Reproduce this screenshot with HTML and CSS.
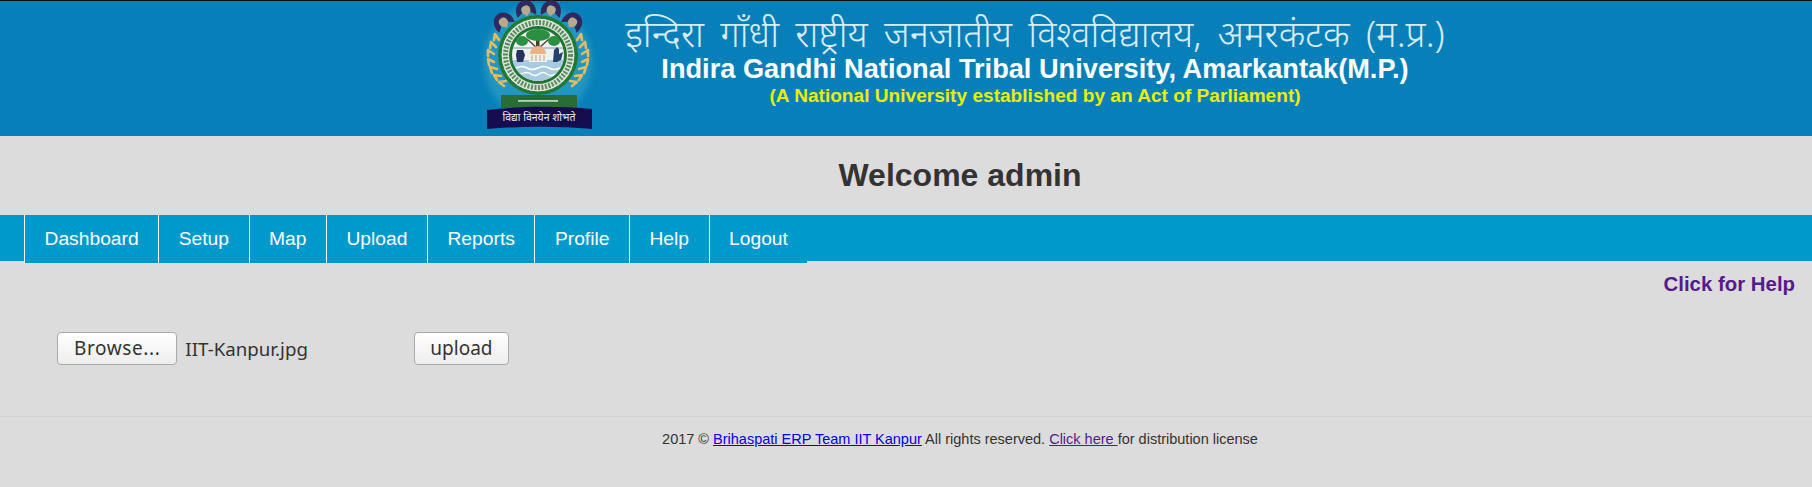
FILE: index.html
```html
<!DOCTYPE html>
<html lang="en">
<head>
<meta charset="utf-8">
<title>Welcome admin</title>
<link rel="stylesheet" href="styles.css">
</head>
<body>
<header class="banner">
  <svg class="logo" viewBox="0 0 120 136" width="120" height="136" aria-label="University emblem">
    <defs>
      <filter id="soft" x="-10%" y="-10%" width="120%" height="120%"><feGaussianBlur stdDeviation="0.6"/></filter>
      <filter id="glow" x="-20%" y="-20%" width="140%" height="140%"><feGaussianBlur stdDeviation="3"/></filter>
      <g id="crest">
        <path d="M-7 4C-9-4-4-8 0-8S9-4 7 4L3 1C4-3 2-4 0-4S-4-3-3 1Z" fill="#2e2a5e"/>
        <path d="M-3 1C-4-3-2-4 0-4S4-3 3 1L0 4Z" fill="#b9a98a"/>
      </g>
      <g id="wheat" fill="none" stroke="#e0bd62" stroke-width="2.6" stroke-linecap="round">
        <path d="M15 34l-1 6m1-6l4 6"/>
        <path d="M11 42l-1 6m1-6l5 5"/>
        <path d="M8 50l0 6m0-6l6 4"/>
        <path d="M8 59l1 6m-1-6l6 3"/>
        <path d="M10 67l2 6m-2-6l7 2"/>
        <path d="M14 75l3 5m-3-5l7 1"/>
        <path d="M19 82l5 4m-5-4l7-1"/>
      </g>
    </defs>
    <ellipse cx="58" cy="62" rx="54" ry="58" fill="#3aa7c9" opacity=".55" filter="url(#glow)"/>
    <g filter="url(#soft)">
      <use href="#crest" transform="translate(24 23) rotate(-35) scale(1.35)"/>
      <use href="#crest" transform="translate(46 11) rotate(-10) scale(1.35)"/>
      <use href="#crest" transform="translate(71 11) rotate(10) scale(1.35)"/>
      <use href="#crest" transform="translate(92 23) rotate(35) scale(1.35)"/>
      <use href="#wheat"/>
      <use href="#wheat" transform="matrix(-1 0 0 1 116 0)"/>
      <circle cx="58" cy="55" r="40" fill="#1f7a35"/>
      <circle cx="58" cy="55" r="37" fill="#dfe6d8"/>
      <circle cx="58" cy="55" r="37" fill="none" stroke="#1f7a35" stroke-width="1"/>
      <circle cx="58" cy="55" r="32.5" fill="none" stroke="#5c8a66" stroke-width="5" stroke-dasharray="2 1.5"/>
      <circle cx="58" cy="55" r="29" fill="#1a7433"/>
      <circle cx="58" cy="55" r="26" fill="#eef1f2"/>
      <path d="M32.5 60h51a26 26 0 0 1-51 0z" fill="#a9cbe2"/>
      <path d="M36 68q6-3 11 0t11 0 11 0 11 0M41 74q6-3 10 0t8 0 8 0 8 0" fill="none" stroke="#fff" stroke-width="1.5"/>
      <rect x="33" y="47" width="50" height="2" fill="#b9c3d4"/>
      <rect x="56" y="38" width="3.5" height="13" fill="#4b3f2b"/>
      <path d="M47 39l10 9M69 39l-10 9" stroke="#4b3f2b" stroke-width="1.3"/>
      <ellipse cx="58" cy="35" rx="12" ry="6" fill="#2c8f3f"/>
      <ellipse cx="42" cy="41" rx="6" ry="5" fill="#2c8f3f"/>
      <ellipse cx="74" cy="41" rx="6" ry="5" fill="#2c8f3f"/>
      <path d="M50 54a8 8 0 0 1 16 0z" fill="#eab384"/>
      <rect x="49" y="54" width="18" height="8" fill="#f3f0e6"/>
      <path d="M52 55v6M56 55v6M60 55v6M64 55v6" stroke="#a6a89a" stroke-width="1"/>
      <path d="M37 50h6l2 5-2 7h-6l-1-7z" fill="#25305c"/>
      <path d="M74 50l3-3 2 2v5l4-2-2 8-4 2h-4z" fill="#25406f"/>
      <rect x="21" y="95" width="76" height="13" fill="#2b6c36"/>
      <path d="M7 110c33-4 72-4 105-1l0 20c-35-3-70-3-105 0z" fill="#15114f"/>
    </g>
    <rect x="38" y="100" width="40" height="1.8" fill="#bcd0bc"/>
    <text class="ribbon" x="59" y="121" text-anchor="middle">विद्या विनयेन शोभते</text>
  </svg>
  <div class="banner-text">
    <div class="hindi">इन्दिरा गाँधी राष्ट्रीय जनजातीय विश्वविद्यालय, अमरकंटक (म.प्र.)</div>
    <div class="english">Indira Gandhi National Tribal University, Amarkantak(M.P.)</div>
    <div class="tagline">(A National University established by an Act of Parliament)</div>
  </div>
</header>
<h1 class="welcome">Welcome admin</h1>
<nav class="nav">
  <a href="#">Dashboard</a><a href="#">Setup</a><a href="#">Map</a><a href="#">Upload</a><a href="#">Reports</a><a href="#">Profile</a><a href="#">Help</a><a href="#">Logout</a>
</nav>
<main class="content">
  <div class="help-row"><a class="help" href="#">Click for Help</a></div>
  <form class="upload-form">
    <button type="button" class="btn browse">Browse...</button>
    <span class="filename">IIT-Kanpur.jpg</span>
    <button type="button" class="btn upload">upload</button>
  </form>
</main>
<footer class="footer">
  2017 © <a href="#" class="link">Brihaspati ERP Team IIT Kanpur</a> All rights reserved. <a href="#" class="link visited">Click here </a>for distribution license
</footer>
</body>
</html>
```
FILE: styles.css
```css
* { box-sizing: border-box; }
html, body { margin: 0; height: 100%; }
body { background: #dcdcdc; color: #333; font-family: "Liberation Sans", Arial, sans-serif; overflow: hidden; }
.banner { height: 136px; background: #0780b9; border-top: 1px solid #111; display: flex; padding-left: 480px; }
.logo { flex: none; margin-top: -1px; }
.ribbon { font-family: "Noto Sans", "Liberation Sans", sans-serif; font-size: 10.5px; fill: #e8e8f0; }
.banner-text { width: 860px; margin-left: 5px; text-align: center; }
.hindi { color: #d8ecf6; font-family: "Noto Sans", "Liberation Sans", sans-serif; font-size: 36.6px; font-weight: 300; word-spacing: 6.7px; line-height: 40px; margin-top: 12px; white-space: nowrap; }
.english { color: #fff; font-weight: 700; font-size: 27.2px; line-height: 28px; margin-top: 2px; white-space: nowrap; }
.tagline { color: #e6ef00; font-weight: 700; font-size: 19.1px; line-height: 22px; margin-top: 2px; white-space: nowrap; }
.welcome { margin: 0; height: 79px; padding: 19px 0 0 108px; text-align: center; font-size: 32px; line-height: 40px; font-weight: 700; color: #333; }
.nav { display: flex; height: 46px; background: #0099cc; padding-left: 24px; }
.nav a { height: 48px; padding: 0 19.5px; background: #0099cc; color: #fff; font-size: 19.25px; line-height: 47px; text-decoration: none; border-right: 1px solid #fff; }
.nav a:first-child { border-left: 1px solid #fff; }
.nav a:last-child { border-right: 0; }
.content { height: 155px; }
.help-row { text-align: right; padding: 11px 17px 0 0; height: 71px; }
.help { color: #551a8b; font-weight: 700; font-size: 20.4px; line-height: 24px; text-decoration: none; }
.upload-form { display: flex; align-items: center; padding-left: 57px; }
.btn { height: 33px; padding: 0 16px; background: linear-gradient(#fff, #eee); border: 1px solid #aaa; border-radius: 4px; color: #333; font-family: "Noto Sans", sans-serif; font-size: 19px; line-height: 1; }
.browse { letter-spacing: .6px; }
.upload { padding: 0 15px; }
.filename { width: 237px; padding-left: 8px; color: #333; font-family: "Noto Sans", sans-serif; font-size: 18.7px; }
.footer { border-top: 1px solid #d2d2d2; padding: 12px 0 0 108px; text-align: center; font-size: 14.5px; line-height: 20px; color: #333; }
.link { color: #0000ee; text-decoration: underline; }
.visited { color: #551a8b; }
```
